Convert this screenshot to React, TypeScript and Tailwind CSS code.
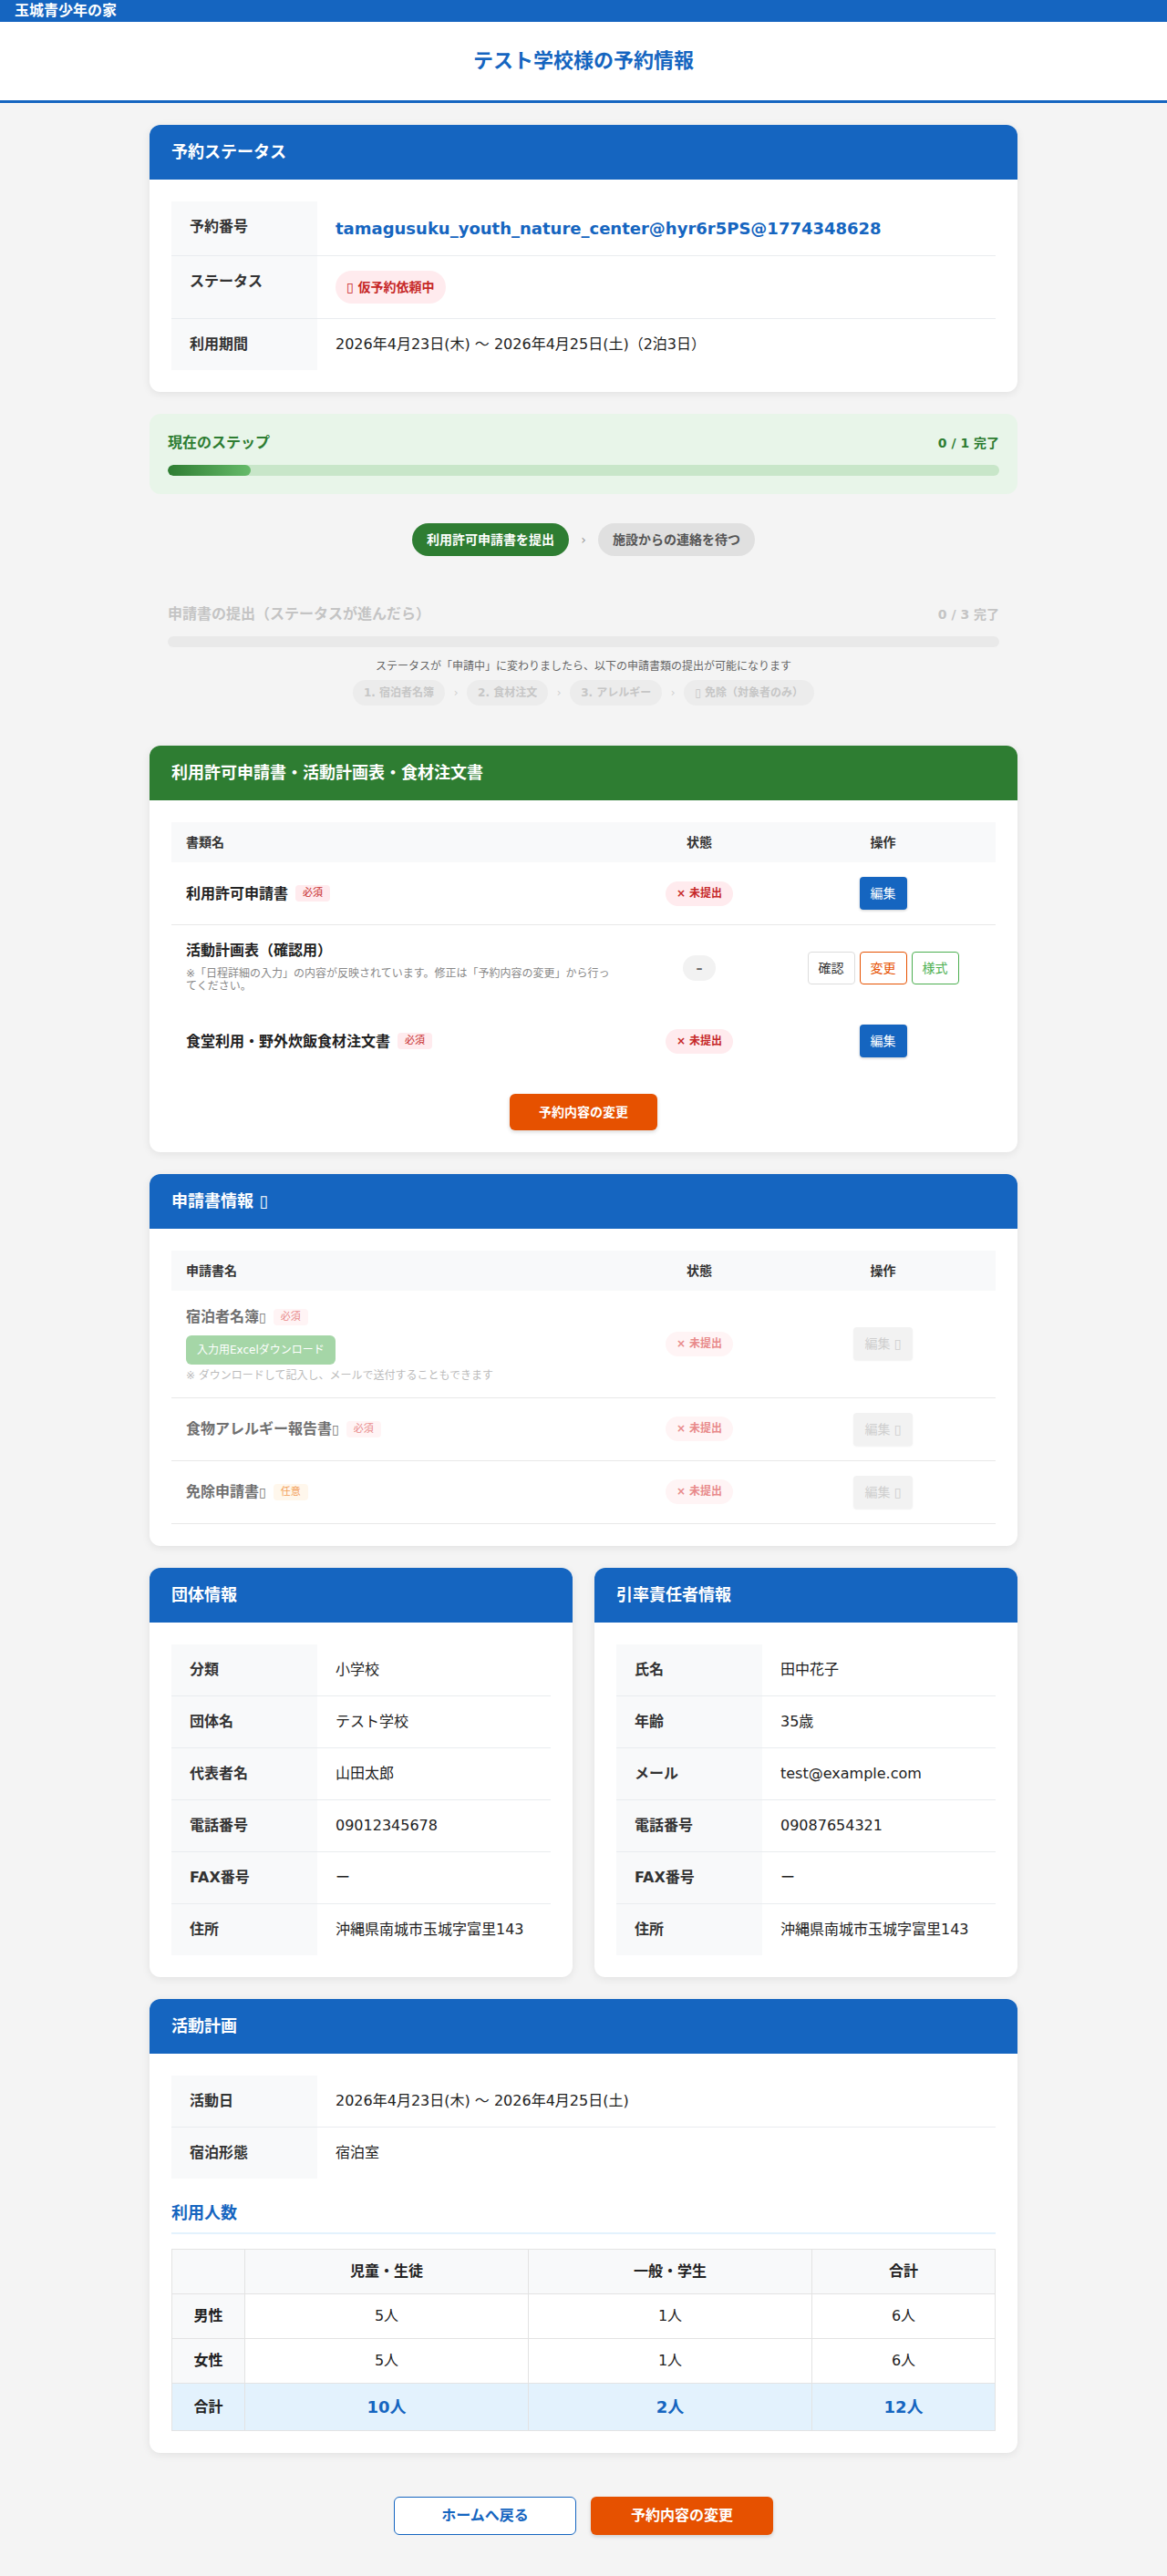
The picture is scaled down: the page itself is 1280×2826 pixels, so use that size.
import React from "react";

const FONT = "font-['DejaVu_Sans','Noto_Sans_CJK_JP',sans-serif]";

function Card({ title, color, children }: { title: React.ReactNode; color: string; children: React.ReactNode }) {
  return (
    <section className="bg-white rounded-xl shadow-[0_2px_10px_rgba(0,0,0,0.08)] overflow-hidden">
      <div className={`h-[60px] px-6 flex items-center text-lg font-bold text-white ${color}`}>{title}</div>
      <div className="p-6">{children}</div>
    </section>
  );
}

function InfoTable({ rows }: { rows: [string, React.ReactNode][] }) {
  return (
    <table className="w-full border-collapse">
      <tbody>
        {rows.map((r, i) => (
          <tr key={i} className={i < rows.length - 1 ? "border-b border-[#e9ecef]" : ""}>
            <th className="w-[160px] bg-[#f8f9fa] px-5 py-4 text-left align-top font-bold text-[#333] leading-6 text-base">
              {r[0]}
            </th>
            <td className="px-5 py-4 text-[#222] leading-6 text-base align-middle">{r[1]}</td>
          </tr>
        ))}
      </tbody>
    </table>
  );
}

function Tofu({ className }: { className?: string }) {
  return <span className={`font-['DejaVu_Sans'] font-normal ${className ?? ""}`}>▯</span>;
}

function Required({ faded }: { faded?: boolean }) {
  return (
    <span
      className={
        faded
          ? "ml-2 inline-block rounded bg-[#fff4f5] px-2 py-px text-[11px] leading-4 text-[#e88a8a] align-middle"
          : "ml-2 inline-block rounded bg-[#ffebee] px-2 py-px text-[11px] leading-4 text-[#c62828] align-middle"
      }
    >
      必須
    </span>
  );
}

function NotSubmitted({ faded }: { faded?: boolean }) {
  return (
    <span
      className={
        faded
          ? "inline-block rounded-full bg-[#fff4f5] px-3 py-1 text-xs leading-[19px] font-bold text-[#e88a8a]"
          : "inline-block rounded-full bg-[#ffebee] px-3 py-1 text-xs leading-[19px] font-bold text-[#c62828]"
      }
    >
      × 未提出
    </span>
  );
}

function EditBtn() {
  return (
    <button className="bg-[#1565c0] text-white text-sm px-3 py-2 leading-5 rounded shadow-[0_1px_3px_rgba(0,0,0,0.2)]">
      編集
    </button>
  );
}

function DisabledEdit() {
  return (
    <button className="bg-[#f2f2f2] text-[#cfcfcf] text-sm px-3 py-2 leading-5 rounded shadow-[0_1px_2px_rgba(0,0,0,0.06)]">
      編集 <Tofu />
    </button>
  );
}

function DocTableHead({ first }: { first: string }) {
  return (
    <thead>
      <tr className="bg-[#f8f9fa]">
        <th className="px-4 py-3 text-left text-sm font-bold text-[#333] leading-5">{first}</th>
        <th className="px-4 py-3 text-center text-sm font-bold text-[#333] leading-5">状態</th>
        <th className="px-4 py-3 text-center text-sm font-bold text-[#333] leading-5">操作</th>
      </tr>
    </thead>
  );
}

function Cols() {
  return (
    <colgroup>
      <col />
      <col className="w-[156px]" />
      <col className="w-[247px]" />
    </colgroup>
  );
}

export default function App() {
  return (
    <div className={`min-h-screen bg-[#f4f4f4] ${FONT} text-[#333]`}>
      <div className="h-6 bg-[#1565c0] px-4 flex items-center shadow-[0_1px_3px_rgba(0,0,0,0.15)]">
        <span className="text-white font-bold text-base leading-6">玉城青少年の家</span>
      </div>
      <div className="h-[86px] bg-white flex items-center justify-center border-b-[3px] border-[#1565c0] box-content">
        <h1 className="text-[22px] font-bold text-[#1565c0] leading-[30px]">テスト学校様の予約情報</h1>
      </div>

      <main className="max-w-[1000px] mx-auto px-6 pt-6 pb-12 flex flex-col gap-6">
        <Card title="予約ステータス" color="bg-[#1565c0]">
          <InfoTable
            rows={[
              [
                "予約番号",
                <span className="text-lg font-bold text-[#1565c0] leading-[27px]">
                  tamagusuku_youth_nature_center@hyr6r5PS@1774348628
                </span>,
              ],
              [
                "ステータス",
                <span className="inline-block rounded-full bg-[#ffebee] px-3 py-2 text-sm leading-5 font-bold text-[#c62828]">
                  <Tofu /> 仮予約依頼中
                </span>,
              ],
              ["利用期間", "2026年4月23日(木) 〜 2026年4月25日(土)（2泊3日）"],
            ]}
          />
        </Card>

        <section className="rounded-xl bg-[#e8f5e9] p-5">
          <div className="flex items-center justify-between h-6">
            <span className="text-base font-bold text-[#2e7d32]">現在のステップ</span>
            <span className="text-sm font-bold text-[#2e7d32]">0 / 1 完了</span>
          </div>
          <div className="mt-3 h-3 rounded-full bg-[#c8e6c9] overflow-hidden">
            <div className="h-3 w-[10%] rounded-full bg-gradient-to-r from-[#2e7d32] to-[#66bb6a]" />
          </div>
        </section>

        <div className="py-2 flex items-center justify-center gap-3">
          <span className="rounded-full bg-[#2e7d32] px-4 py-2 text-sm leading-5 font-bold text-white">
            利用許可申請書を提出
          </span>
          <span className="w-2 text-center text-sm text-[#999]">›</span>
          <span className="rounded-full bg-[#e0e0e0] px-4 py-2 text-sm leading-5 font-bold text-[#555]">
            施設からの連絡を待つ
          </span>
        </div>

        <section className="p-5">
          <div className="flex items-center justify-between h-6">
            <span className="text-base font-bold text-[#c4c4c4]">申請書の提出（ステータスが進んだら）</span>
            <span className="text-sm font-bold text-[#c4c4c4]">0 / 3 完了</span>
          </div>
          <div className="mt-3 h-3 rounded-full bg-[#e9e9e9]" />
          <p className="mt-3 text-xs leading-[18px] text-center text-[#666]">
            ステータスが「申請中」に変わりましたら、以下の申請書類の提出が可能になります
          </p>
          <div className="mt-[6px] flex items-center justify-center gap-2">
            {[
              <>1. 宿泊者名簿</>,
              <>2. 食材注文</>,
              <>3. アレルギー</>,
              <>
                <Tofu /> 免除（対象者のみ）
              </>,
            ].map((t, i) => (
              <React.Fragment key={i}>
                {i > 0 && <span className="w-2 text-center text-xs text-[#d0d0d0]">›</span>}
                <span className="rounded-full bg-[#ececec] px-3 py-1 text-xs leading-5 font-bold text-[#c6c6c6]">
                  {t}
                </span>
              </React.Fragment>
            ))}
          </div>
        </section>

        <Card title="利用許可申請書・活動計画表・食材注文書" color="bg-[#2e7d32]">
          <table className="w-full border-collapse table-fixed">
            <Cols />
            <DocTableHead first="書類名" />
            <tbody>
              <tr className="border-b border-[#e8e8e8]">
                <td className="px-4 py-4">
                  <span className="text-base font-bold text-[#222] leading-6 align-middle">利用許可申請書</span>
                  <Required />
                </td>
                <td className="px-4 py-4 text-center">
                  <NotSubmitted />
                </td>
                <td className="px-4 py-4 text-center">
                  <EditBtn />
                </td>
              </tr>
              <tr>
                <td className="px-4 pt-4 pb-[19px]">
                  <div className="text-base font-bold text-[#222] leading-6">活動計画表（確認用）</div>
                  <div className="mt-[6px] text-xs leading-[14px] text-[#888]">
                    ※「日程詳細の入力」の内容が反映されています。修正は「予約内容の変更」から行ってください。
                  </div>
                </td>
                <td className="px-4 py-4 text-center">
                  <span className="inline-flex w-9 h-7 items-center justify-center rounded-full bg-[#f2f2f2] text-sm font-bold text-[#666]">
                    –
                  </span>
                </td>
                <td className="px-2 py-4">
                  <div className="flex items-center justify-center gap-[5px]">
                    <button className="bg-white border border-[#ddd] text-[#333] text-sm px-[11px] py-[7px] leading-5 rounded">
                      確認
                    </button>
                    <button className="bg-white border border-[#e65100] text-[#e65100] text-sm px-[11px] py-[7px] leading-5 rounded">
                      変更
                    </button>
                    <button className="bg-white border border-[#4caf50] text-[#4caf50] text-sm px-[11px] py-[7px] leading-5 rounded">
                      様式
                    </button>
                  </div>
                </td>
              </tr>
              <tr>
                <td className="px-4 py-4">
                  <span className="text-base font-bold text-[#222] leading-6 align-middle">食堂利用・野外炊飯食材注文書</span>
                  <Required />
                </td>
                <td className="px-4 py-4 text-center">
                  <NotSubmitted />
                </td>
                <td className="px-4 py-4 text-center">
                  <EditBtn />
                </td>
              </tr>
            </tbody>
          </table>
          <div className="mt-6 flex justify-center">
            <button className="bg-[#e65100] text-white text-sm font-bold px-8 py-2.5 leading-5 rounded-md shadow-[0_2px_4px_rgba(0,0,0,0.15)]">
              予約内容の変更
            </button>
          </div>
        </Card>

        <Card
          title={
            <span>
              申請書情報 <Tofu />
            </span>
          }
          color="bg-[#1565c0]"
        >
          <table className="w-full border-collapse table-fixed">
            <Cols />
            <DocTableHead first="申請書名" />
            <tbody>
              <tr className="border-b border-[#e8e8e8]">
                <td className="px-4 py-4">
                  <div className="leading-6">
                    <span className="text-base font-bold text-[#707070] align-middle">
                      宿泊者名簿<Tofu className="text-sm" />
                    </span>
                    <Required faded />
                  </div>
                  <div className="mt-2 h-8">
                    <span className="inline-block rounded-md bg-[#a5d6a7] px-3 py-[7px] text-xs leading-[18px] text-white">
                      入力用Excelダウンロード
                    </span>
                  </div>
                  <div className="mt-1 text-xs leading-4 text-[#bbb]">
                    ※ ダウンロードして記入し、メールで送付することもできます
                  </div>
                </td>
                <td className="px-4 py-4 text-center">
                  <NotSubmitted faded />
                </td>
                <td className="px-4 py-4 text-center">
                  <DisabledEdit />
                </td>
              </tr>
              <tr className="border-b border-[#e8e8e8]">
                <td className="px-4 py-4">
                  <span className="text-base font-bold text-[#707070] leading-6 align-middle">
                    食物アレルギー報告書<Tofu className="text-sm" />
                  </span>
                  <Required faded />
                </td>
                <td className="px-4 py-4 text-center">
                  <NotSubmitted faded />
                </td>
                <td className="px-4 py-4 text-center">
                  <DisabledEdit />
                </td>
              </tr>
              <tr className="border-b border-[#e8e8e8]">
                <td className="px-4 py-4">
                  <span className="text-base font-bold text-[#707070] leading-6 align-middle">
                    免除申請書<Tofu className="text-sm" />
                  </span>
                  <span className="ml-2 inline-block rounded bg-[#fff7ec] px-2 py-px text-[11px] leading-4 text-[#f3a15a] align-middle">
                    任意
                  </span>
                </td>
                <td className="px-4 py-4 text-center">
                  <NotSubmitted faded />
                </td>
                <td className="px-4 py-4 text-center">
                  <DisabledEdit />
                </td>
              </tr>
            </tbody>
          </table>
        </Card>

        <div className="grid grid-cols-2 gap-6">
          <Card title="団体情報" color="bg-[#1565c0]">
            <InfoTable
              rows={[
                ["分類", "小学校"],
                ["団体名", "テスト学校"],
                ["代表者名", "山田太郎"],
                ["電話番号", "09012345678"],
                ["FAX番号", "ー"],
                ["住所", "沖縄県南城市玉城字富里143"],
              ]}
            />
          </Card>
          <Card title="引率責任者情報" color="bg-[#1565c0]">
            <InfoTable
              rows={[
                ["氏名", "田中花子"],
                ["年齢", "35歳"],
                ["メール", "test@example.com"],
                ["電話番号", "09087654321"],
                ["FAX番号", "ー"],
                ["住所", "沖縄県南城市玉城字富里143"],
              ]}
            />
          </Card>
        </div>

        <Card title="活動計画" color="bg-[#1565c0]">
          <InfoTable
            rows={[
              ["活動日", "2026年4月23日(木) 〜 2026年4月25日(土)"],
              ["宿泊形態", "宿泊室"],
            ]}
          />
          <h3 className="mt-6 pb-2 border-b-2 border-[#e3f2fd] text-lg font-bold text-[#1565c0] leading-[27px]">
            利用人数
          </h3>
          <table className="mt-4 w-full border-collapse table-fixed">
            <colgroup>
              <col className="w-[80px]" />
              <col className="w-[311px]" />
              <col className="w-[311px]" />
              <col />
            </colgroup>
            <thead>
              <tr className="bg-[#f8f9fa]">
                <th className="border border-[#e3e3e3] py-3 leading-6"></th>
                <th className="border border-[#e3e3e3] py-3 leading-6 font-bold text-[#222] text-center">児童・生徒</th>
                <th className="border border-[#e3e3e3] py-3 leading-6 font-bold text-[#222] text-center">一般・学生</th>
                <th className="border border-[#e3e3e3] py-3 leading-6 font-bold text-[#222] text-center">合計</th>
              </tr>
            </thead>
            <tbody>
              {[
                ["男性", "5人", "1人", "6人"],
                ["女性", "5人", "1人", "6人"],
              ].map((r) => (
                <tr key={r[0]}>
                  <th className="border border-[#e3e3e3] bg-[#f8f9fa] py-3 leading-6 font-bold text-[#222] text-center">
                    {r[0]}
                  </th>
                  {r.slice(1).map((c, j) => (
                    <td key={j} className="border border-[#e3e3e3] py-3 leading-6 text-[#222] text-center">
                      {c}
                    </td>
                  ))}
                </tr>
              ))}
              <tr className="bg-[#e3f2fd]">
                <th className="border border-[#e3e3e3] py-3 leading-[27px] font-bold text-[#222] text-center">合計</th>
                <td className="border border-[#e3e3e3] py-3 leading-[27px] text-lg font-bold text-[#1565c0] text-center">10人</td>
                <td className="border border-[#e3e3e3] py-3 leading-[27px] text-lg font-bold text-[#1565c0] text-center">2人</td>
                <td className="border border-[#e3e3e3] py-3 leading-[27px] text-lg font-bold text-[#1565c0] text-center">12人</td>
              </tr>
            </tbody>
          </table>
        </Card>

        <div className="mt-6 flex justify-center gap-4">
          <button className="w-[200px] bg-white border border-[#1565c0] text-[#1565c0] text-base font-bold py-2 leading-6 rounded-md">
            ホームへ戻る
          </button>
          <button className="w-[200px] bg-[#e65100] text-white text-base font-bold py-2 leading-6 rounded-md shadow-[0_2px_4px_rgba(0,0,0,0.15)]">
            予約内容の変更
          </button>
        </div>
      </main>
    </div>
  );
}
